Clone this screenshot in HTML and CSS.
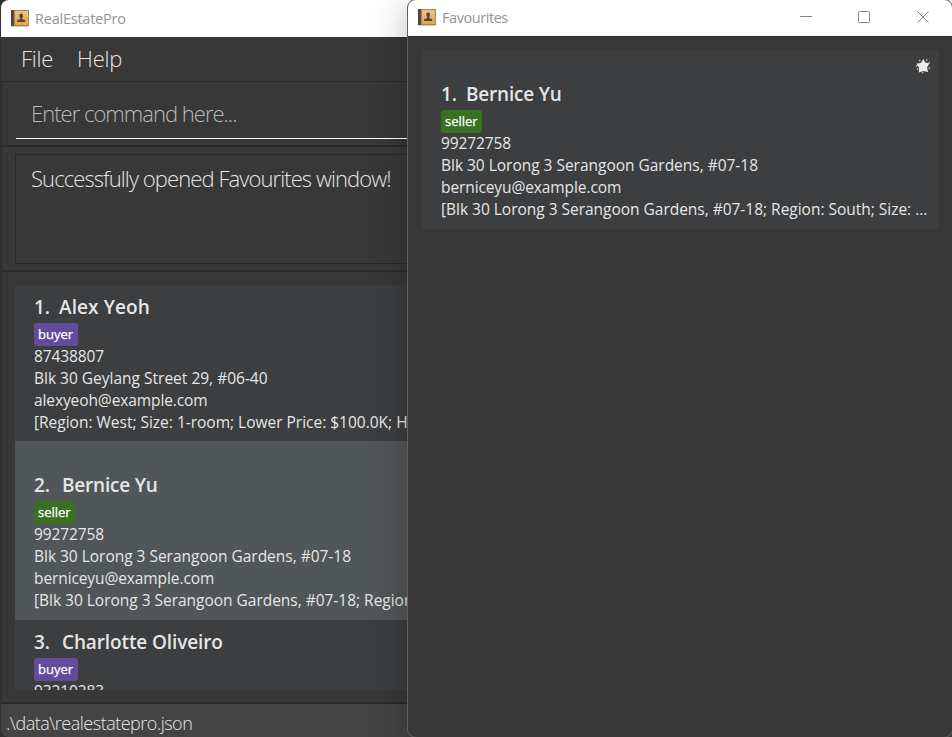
FILE: index.html
```html
<!DOCTYPE html>
<html lang="en">
<head>
<meta charset="utf-8">
<title>RealEstatePro</title>
<link rel="stylesheet" href="styles.css">
</head>
<body>
<svg class="defs" aria-hidden="true">
  <defs>
    <linearGradient id="cover" x1="0" y1="0" x2="0" y2="1">
      <stop offset="0" stop-color="#e6c58a"/><stop offset="1" stop-color="#dba84c"/>
    </linearGradient>
    <symbol id="book" viewBox="0 0 18 17">
      <path d="M1 0h17v16H1z" fill="#a88652"/>
      <path d="M4 1h13v14H4z" fill="url(#cover)"/>
      <path d="M0 0h2.800v16H0z" fill="#51403b"/>
      <path d="M.5 16.500h17" stroke="#cfc6ba"/>
      <path d="M10.200 3.500a1.900 1.900 0 0 1 1.900 2c0 1-.4 1.700-.8 2.200v1.600l2.900.8v2H6.200v-2l2.900-.8V7.700c-.5-.5-.8-1.200-.8-2.200a1.900 1.900 0 0 1 1.900-2z" fill="#5a4632"/>
    </symbol>
  </defs>
</svg>
<main class="window main-window">
  <header class="titlebar">
    <svg class="app-icon"><use href="#book"/></svg>
    <span class="title title-main">RealEstatePro</span>
  </header>
  <nav class="menu"><span class="menu-file">File</span><span class="menu-help">Help</span></nav>
  <section class="command"><div class="command-field">Enter command here...</div></section>
  <section class="result"><div class="result-box">Successfully opened Favourites window!</div></section>
  <section class="people">
    <div class="list">
      <article class="card">
        <h2><span class="num">1.</span><span class="name-alex">Alex Yeoh</span></h2>
        <div class="tags"><span class="tag buyer">buyer</span></div>
        <p class="phone">87438807</p>
        <p class="addr-alex">Blk 30 Geylang Street 29, #06-40</p>
        <p class="mail">alexyeoh@example.com</p>
        <p class="prop-alex">[Region: West; Size: 1-room; Lower Price: $100.0K; Higher Price: $200.0K]</p>
      </article>
      <article class="card selected">
        <div class="star-row"></div>
        <h2><span class="num wide">2.</span><span class="name-bernice">Bernice Yu</span></h2>
        <div class="tags"><span class="tag seller">seller</span></div>
        <p class="phone">99272758</p>
        <p class="addr">Blk 30 Lorong 3 Serangoon Gardens, #07-18</p>
        <p class="mail">berniceyu@example.com</p>
        <p class="prop">[Blk 30 Lorong 3 Serangoon Gardens, #07-18; Region: South; Size: ...</p>
      </article>
      <article class="card">
        <h2><span class="num wide">3.</span><span class="name-charlotte">Charlotte Oliveiro</span></h2>
        <div class="tags"><span class="tag buyer">buyer</span></div>
        <p class="phone">93210283</p>
      </article>
    </div>
  </section>
  <footer class="status"><span>.\data\realestatepro.json</span></footer>
</main>
<aside class="window fav-window">
  <header class="titlebar">
    <svg class="app-icon"><use href="#book"/></svg>
    <span class="title title-fav">Favourites</span>
    <svg class="controls" viewBox="0 0 134 16" fill="none" stroke="#858585" stroke-width="1">
      <path d="M0 6.500h12"/>
      <rect x="58.500" y="1.500" width="11" height="11" rx="1"/>
      <path d="M117.500 1.500l11 11m0-11l-11 11"/>
    </svg>
  </header>
  <section class="fav-body">
    <article class="card">
      <div class="star-row">
        <svg class="star" viewBox="0 0 16 16"><path d="M8.200 1l2.100 3.500 4.200.8-2.400 4 .9 4.700-4.600-1-4.600 1.500.3-4.900L1.300 5.700l4.800-.9z" fill="#ececec"/><path d="M4 2.500h1.300M11 2h1.300M.8 8h1.500M13.500 10h1.600M7 14.500h1.400M2 11h1.300M13.800 4.500H15" stroke="#c4c4c4" stroke-width="1.300"/></svg>
      </div>
      <h2><span class="num">1.</span><span class="name-bernice">Bernice Yu</span></h2>
      <div class="tags"><span class="tag seller">seller</span></div>
      <p class="phone">99272758</p>
      <p class="addr">Blk 30 Lorong 3 Serangoon Gardens, #07-18</p>
      <p class="mail">berniceyu@example.com</p>
      <p class="prop">[Blk 30 Lorong 3 Serangoon Gardens, #07-18; Region: South; Size: ...</p>
    </article>
  </section>
</aside>
</body>
</html>
```
FILE: styles.css
```css
* { box-sizing: border-box; }
body {
  margin: 0;
  position: relative;
  width: 952px;
  height: 737px;
  overflow: hidden;
  background: #303235;
  font-family: "Open Sans", "Noto Sans", sans-serif;
  color: #e6e6e6;
}
.defs { position: absolute; width: 0; height: 0; }
.window { display: flex; flex-direction: column; overflow: hidden; background: #383838; }
.main-window { height: 737px; margin-left: 1px; border-radius: 8px 0 0 8px; }
.titlebar { display: flex; align-items: center; flex: none; background: #fff; color: #949494; }
.main-window .titlebar { height: 37px; padding-left: 10px; }
.app-icon { width: 18px; height: 17px; flex: none; }
.title { font-size: 14.500px; font-weight: 400; margin-left: 6px; white-space: nowrap; }
.title-main { padding-bottom: 1px; letter-spacing: -.23px; }
.title-fav { letter-spacing: -.44px; }
.menu {
  display: flex;
  flex: none;
  align-items: center;
  height: 44px;
  padding: 0 0 2px 20px;
  font-size: 22px;
  font-weight: 300;
  letter-spacing: -.25px;
}
.menu-help { margin-left: 24px; }
.command, .result, .people { flex: none; border: 1px solid #2b2b2b; }
.command { height: 65px; padding: 10px 14px; }
.command-field {
  height: 47px;
  padding-left: 15px;
  line-height: 43px;
  border-bottom: 1px solid #fff;
  font-size: 22px;
  font-weight: 300;
  letter-spacing: -.98px;
  color: #b8b8b8;
}
.result { height: 125px; padding: 7px 13px; }
.result-box {
  height: 110px;
  padding: 7px 15px;
  border: 1px solid #292929;
  font-size: 22px;
  font-weight: 300;
  line-height: 32px;
  letter-spacing: -.92px;
  white-space: nowrap;
}
.people { height: 432px; padding: 13px; }
.list { height: 405px; overflow: hidden; background: #3c3e3f; }
.card {
  height: 156px;
  padding: 8px 12px 9px 19px;
  overflow: hidden;
  background: #3c3e3f;
  white-space: nowrap;
}
.card:has(.star-row) { height: 179px; }
.selected { background: #515658; }
.star-row { display: flex; justify-content: flex-end; height: 22px; }
.star { width: 16px; height: 16px; margin: 0 -4px 0 0; }
.card h2 { display: flex; height: 28px; margin: 0; font-size: 19px; font-weight: 600; line-height: 28px; }
.num { width: 25px; }
.num.wide { width: 28px; }
.name-alex { letter-spacing: .1px; }
.name-bernice { letter-spacing: -.2px; }
.name-charlotte { letter-spacing: -.12px; }
.tags { display: flex; height: 24px; padding-top: 2px; }
.tag { height: 23px; padding: 0 4px; border-radius: 3px; font-size: 13px; -webkit-text-stroke: .25px #fff; line-height: 22px; color: #fff; }
.buyer { width: 44px; background: #634b9b; }
.seller { width: 41px; background: #397021; }
.card p { height: 22px; margin: 0; font-size: 15.500px; line-height: 23px; }
.phone { letter-spacing: -.12px; }
.mail { letter-spacing: -.1px; }
.addr, .prop { letter-spacing: -.02px; }
.prop-alex { letter-spacing: -.01px; }
.status {
  flex: none;
  height: 35px;
  padding-left: 5px;
  border-top: 1px solid #292929;
  background: #444;
  font-size: 18px;
  font-weight: 300;
  line-height: 38px;
  letter-spacing: -.5px;
}
.fav-window {
  position: absolute;
  top: -1px;
  left: 407px;
  width: 546px;
  height: 739px;
  border: 1px solid #606060;
  border-radius: 9px;
  box-shadow: 0 8px 34px 2px rgba(0, 0, 0, .24);
}
.fav-window .titlebar { height: 36px; padding: 0 0 1px 10px; }
.fav-window .titlebar .title { margin-right: auto; }
.controls { width: 134px; height: 16px; margin: 0 18px 0 0; }
.fav-body { flex: 1; padding: 13px 13px 0 14px; border-top: 1px solid #2a2a2a; }
```
